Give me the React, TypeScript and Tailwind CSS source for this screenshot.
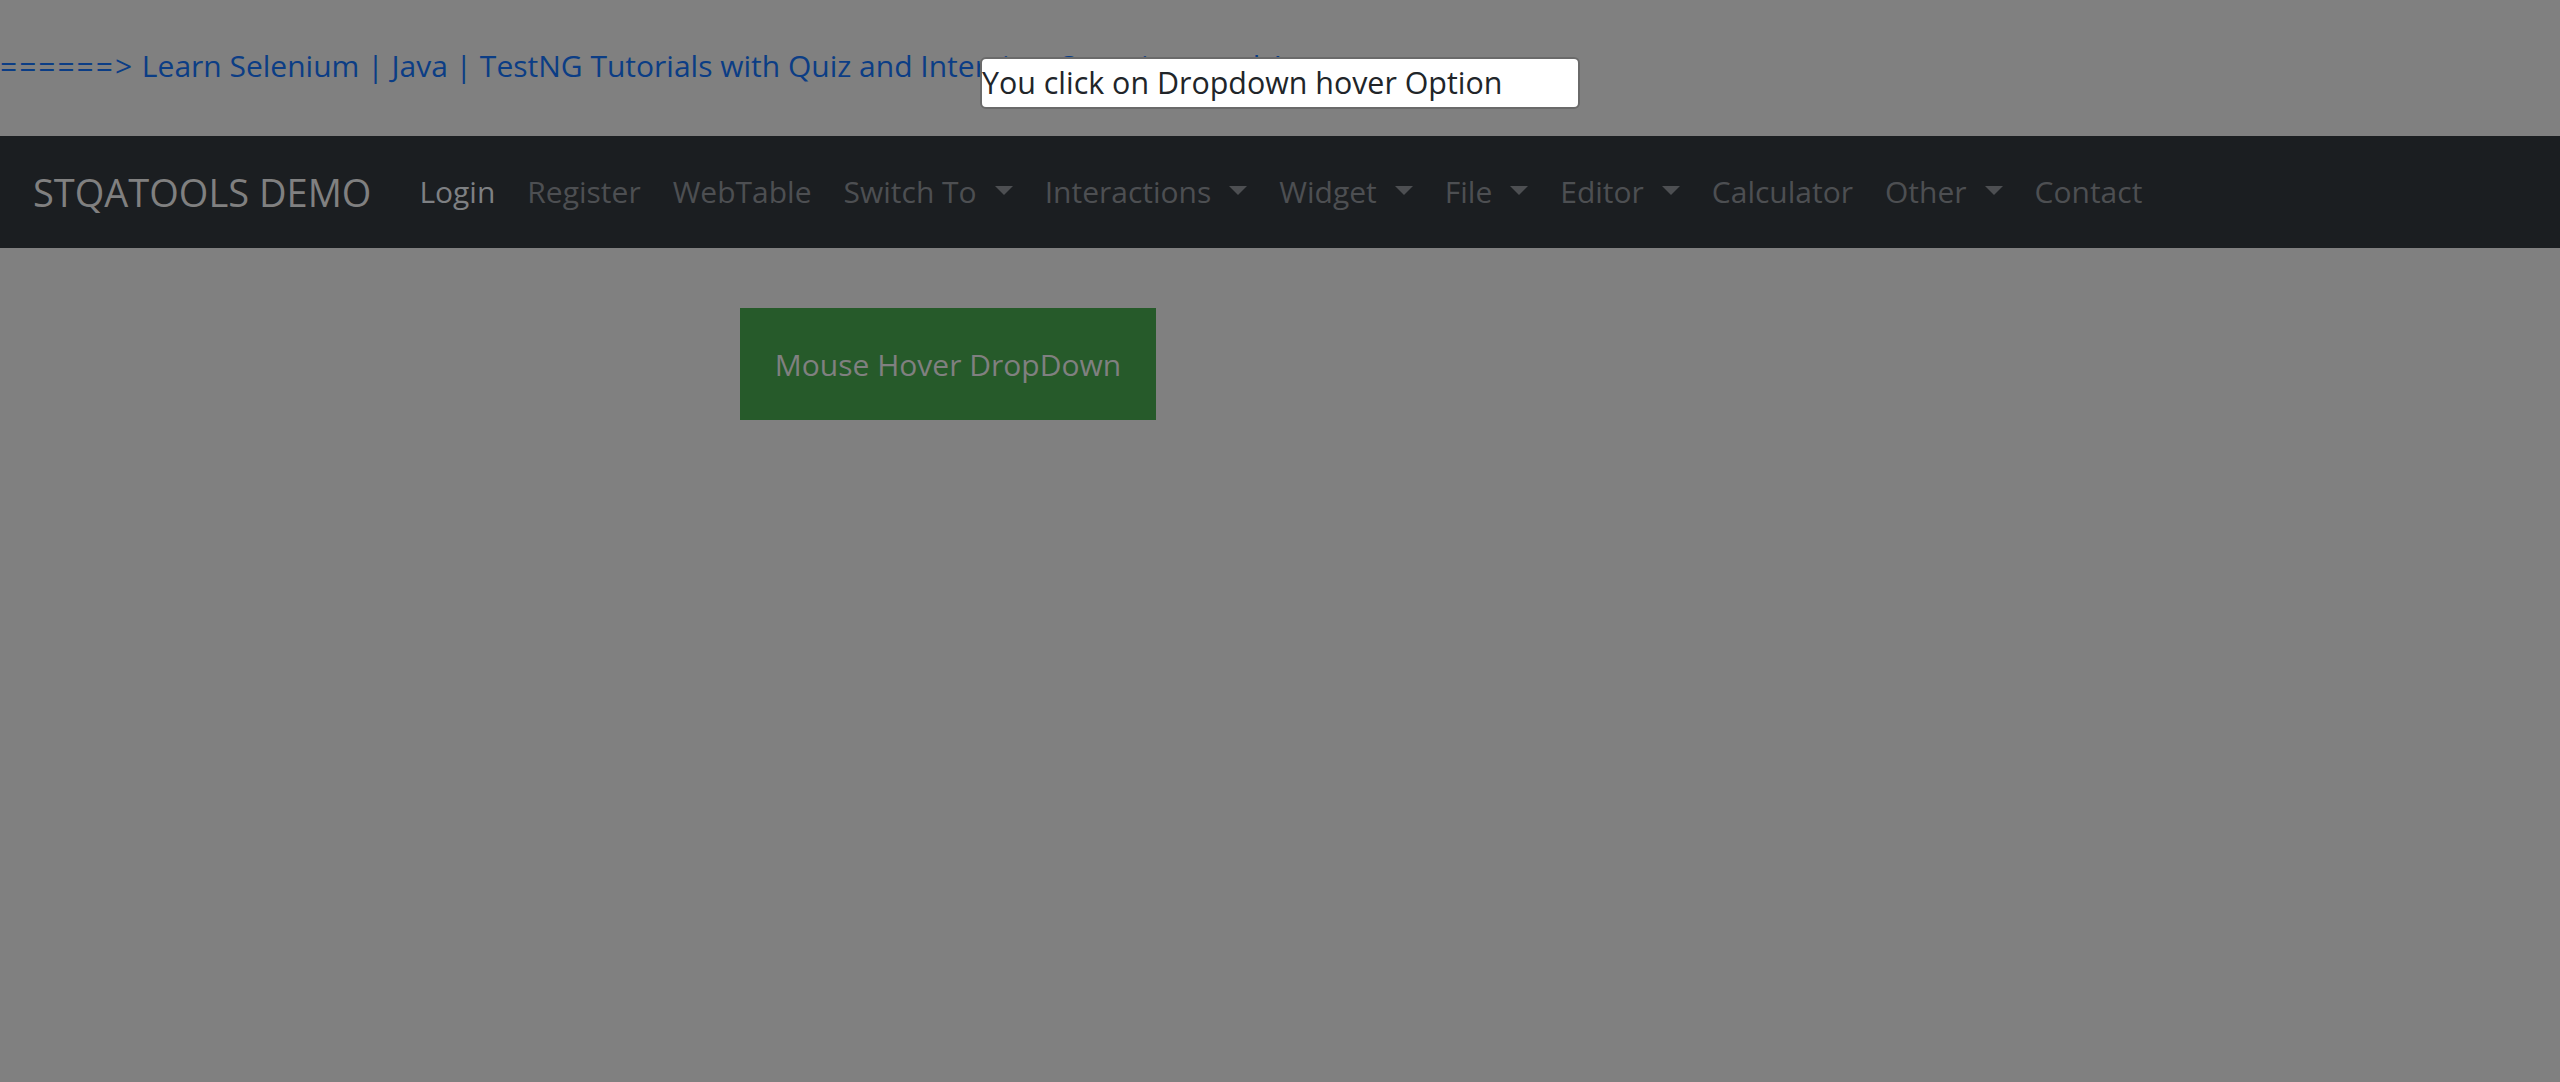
import React from 'react';

const navItems: { label: string; dropdown?: boolean; active?: boolean }[] = [
  { label: 'Login', active: true },
  { label: 'Register' },
  { label: 'WebTable' },
  { label: 'Switch To', dropdown: true },
  { label: 'Interactions', dropdown: true },
  { label: 'Widget', dropdown: true },
  { label: 'File', dropdown: true },
  { label: 'Editor', dropdown: true },
  { label: 'Calculator' },
  { label: 'Other', dropdown: true },
  { label: 'Contact' },
];

const App: React.FC = () => {
  return (
    <div className="relative min-h-[1082px] w-full bg-[#808080] font-['Open_Sans',sans-serif]">
      {/* Top link */}
      <div className="h-[136px] pt-[42px]">
        <a href="#" className="block text-[30px] leading-[48px] text-[#0b3d85] whitespace-nowrap">
          <span className="tracking-[2px]">======&gt;</span> Learn Selenium | Java | TestNG Tutorials with Quiz and Interview Questions and Answers
        </a>
      </div>

      {/* Navbar */}
      <nav className="flex h-[112px] items-center bg-[#1b1e21] pl-[33px]">
        <span className="mr-[32px] text-[38px] text-[#808080] whitespace-nowrap">STQATOOLS DEMO</span>
        <ul className="flex items-center">
          {navItems.map((item) => (
            <li key={item.label} className="flex items-center px-4">
              <span
                className={
                  'text-[30px] leading-[48px] whitespace-nowrap ' +
                  (item.active ? 'text-[#7e8083]' : 'text-[#4d4f52]')
                }
              >
                {item.label}
              </span>
              {item.dropdown && (
                <span className="ml-[18px] mb-[4px] h-0 w-0 border-x-[9px] border-t-[9px] border-x-transparent border-t-[#4d4f52]" />
              )}
            </li>
          ))}
        </ul>
      </nav>

      {/* Content */}
      <div className="pl-[740px] pt-[60px]">
        <button className="flex h-[112px] w-[416px] items-center justify-center bg-[#265a2a] text-[30px] text-[#808080]">
          Mouse Hover DropDown
        </button>
      </div>

      {/* Alert box */}
      <div className="absolute left-[980px] top-[57px] h-[52px] w-[600px] rounded-md border-2 border-[#6a6a6a] bg-white">
        <span className="block text-[30.4px] leading-[48px] text-[#212529] whitespace-nowrap">
          You click on Dropdown hover Option
        </span>
      </div>
    </div>
  );
};

export default App;
